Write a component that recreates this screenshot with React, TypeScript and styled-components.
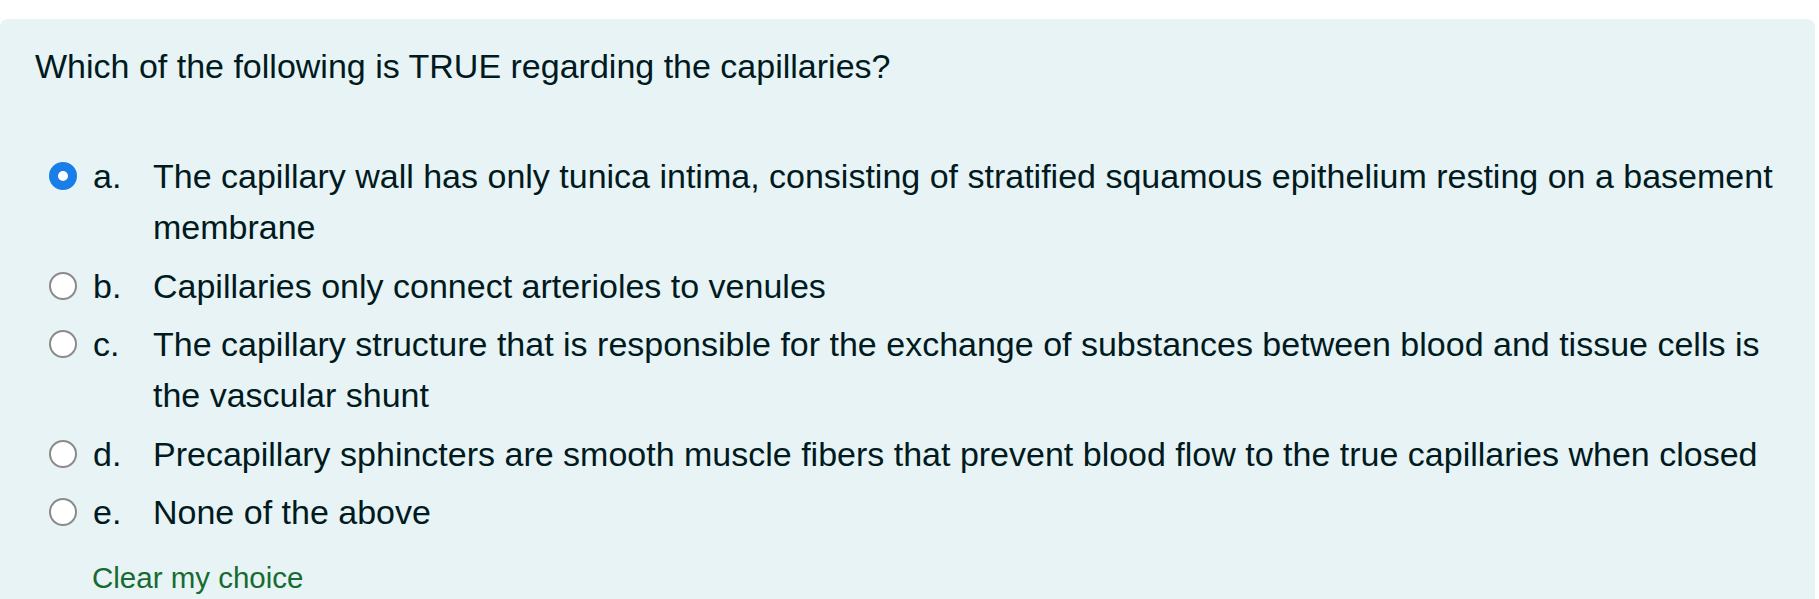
import styled, { createGlobalStyle } from "styled-components";

const options = [
  {
    letter: "a.",
    text: "The capillary wall has only tunica intima, consisting of stratified squamous epithelium resting on a basement membrane",
    checked: true
  },
  { letter: "b.", text: "Capillaries only connect arterioles to venules" },
  {
    letter: "c.",
    text: "The capillary structure that is responsible for the exchange of substances between blood and tissue cells is the vascular shunt"
  },
  {
    letter: "d.",
    text: "Precapillary sphincters are smooth muscle fibers that prevent blood flow to the true capillaries when closed"
  },
  { letter: "e.", text: "None of the above" }
];

const GlobalStyle = createGlobalStyle`
  html,
  body {
    margin: 0;
    background: #ffffff;
  }

  body {
    font-family: "Liberation Sans", Arial, Helvetica, sans-serif;
    color: #001a1e;
    overflow: hidden;
  }
`;

const Page = styled.main`
  padding: 19px 4px 0 0;
  min-height: 100vh;
  box-sizing: border-box;
  display: flex;
`;

const Formulation = styled.section`
  flex: 1;
  background: #e7f3f5;
  border-radius: 8px 8px 0 0;
  padding: 22px 35px 40px 35px;
  font-size: 34px;
  line-height: 1.5;
`;

const QuestionText = styled.p`
  margin: 0 0 59px;
`;

const AnswerList = styled.div`
  display: flex;
  flex-direction: column;
  gap: 7.5px;
  padding-left: 15px;
`;

const AnswerRow = styled.label`
  display: flex;
  align-items: flex-start;
  cursor: pointer;
`;

const Radio = styled.input.attrs({ type: "radio", name: "q1" })`
  appearance: none;
  flex: none;
  box-sizing: border-box;
  width: 28px;
  height: 28px;
  margin: 11px 16px 0 -1px;
  border-radius: 50%;
  border: 2.5px solid #8a8a8a;
  background: #ffffff;

  &:checked {
    border: 9px solid #1a7ee8;
    background: #ffffff;
  }
`;

const Letter = styled.span`
  flex: none;
  width: 60px;
`;

const AnswerText = styled.span`
  flex: 1;
`;

const ClearLink = styled.a`
  display: inline-block;
  margin: 18px 0 0 57px;
  color: #166b30;
  font-size: 29.5px;
  text-decoration: none;
`;

export default function App() {
  return (
    <>
      <GlobalStyle />
      <Page>
        <Formulation>
          <QuestionText>
            Which of the following is TRUE regarding the capillaries?
          </QuestionText>
          <AnswerList>
            {options.map((option) => (
              <AnswerRow key={option.letter}>
                <Radio defaultChecked={option.checked} />
                <Letter>{option.letter}</Letter>
                <AnswerText>{option.text}</AnswerText>
              </AnswerRow>
            ))}
          </AnswerList>
          <ClearLink href="#">Clear my choice</ClearLink>
        </Formulation>
      </Page>
    </>
  );
}
